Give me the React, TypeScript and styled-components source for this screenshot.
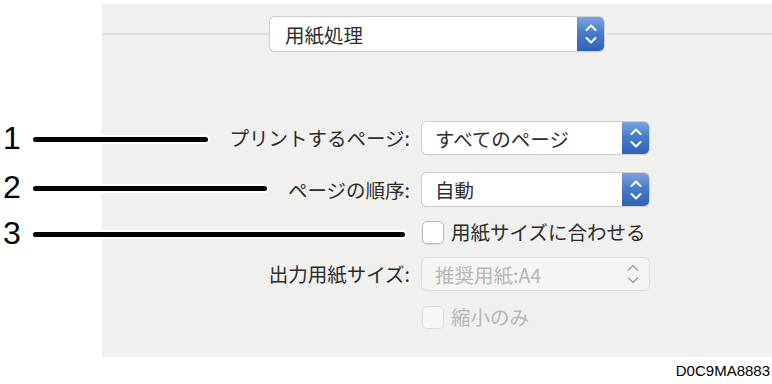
import React, { ReactNode } from 'react';
import styled, { createGlobalStyle } from 'styled-components';

const GlobalStyle = createGlobalStyle`
  html, body {
    margin: 0;
    padding: 0;
    background: #ffffff;
  }
  body {
    font-family: "Noto Sans CJK JP", "Noto Sans", sans-serif;
  }
`;

const Root = styled.div`
  position: relative;
  width: 772px;
  height: 384px;
  overflow: hidden;
  background: #ffffff;
`;

const Panel = styled.div`
  margin: 4px 0 0 102px;
  width: 670px;
  height: 353px;
  background: #f0f0ef;
  padding-top: 13px;
  box-sizing: border-box;
`;

const Header = styled.div`
  display: flex;
  align-items: center;
`;

const Rule = styled.div<{ $grow?: boolean }>`
  height: 2px;
  background: #dedede;
  flex: ${({ $grow }) => ($grow ? '1' : '0 0 168px')};
  margin-left: ${({ $grow }) => ($grow ? '3px' : '0')};
`;

const Form = styled.div`
  display: flex;
  flex-direction: column;
  margin-top: 71px;
`;

const Row = styled.div<{ $gap?: number }>`
  display: grid;
  grid-template-columns: 308px 227px;
  column-gap: 12px;
  align-items: center;
  margin-top: ${({ $gap }) => $gap ?? 0}px;
`;

const Label = styled.div<{ $disabled?: boolean }>`
  text-align: right;
  font-size: 19.5px;
  line-height: 24px;
  color: #2c2c2c;
  white-space: nowrap;
`;

const PopupBox = styled.div<{ $width?: number; $height: number; $disabled?: boolean }>`
  display: flex;
  align-items: stretch;
  width: ${({ $width }) => ($width ? `${$width}px` : 'auto')};
  height: ${({ $height }) => $height}px;
  box-sizing: border-box;
  border-radius: 5px;
  background: ${({ $disabled }) => ($disabled ? '#f5f5f4' : '#ffffff')};
  box-shadow: ${({ $disabled }) =>
    $disabled
      ? '0 0 0 1px #dcdcdc'
      : '0 0 0 1px #cfcfcf, 0 1px 1px 0 rgba(0, 0, 0, 0.18)'};
  overflow: hidden;
`;

const PopupText = styled.div<{ $disabled?: boolean; $pad: number }>`
  flex: 1;
  display: flex;
  align-items: center;
  padding-left: ${({ $pad }) => $pad}px;
  font-size: 19.5px;
  color: ${({ $disabled }) => ($disabled ? '#b7b7b7' : '#2c2c2c')};
  white-space: nowrap;
`;

const Stepper = styled.div<{ $disabled?: boolean }>`
  flex: 0 0 27px;
  display: flex;
  align-items: center;
  justify-content: center;
  background: ${({ $disabled }) =>
    $disabled ? 'transparent' : 'linear-gradient(to bottom, #7ca3df 0%, #4a7ccb 45%, #2f62b3 100%)'};
  margin-right: ${({ $disabled }) => ($disabled ? '3px' : '0')};
`;

const CheckRow = styled.div`
  display: flex;
  align-items: center;
  gap: 7px;
`;

const Box = styled.div<{ $disabled?: boolean }>`
  width: 22px;
  height: 23px;
  box-sizing: border-box;
  border-radius: 5px;
  background: ${({ $disabled }) => ($disabled ? '#f7f7f6' : '#ffffff')};
  border: 1px solid ${({ $disabled }) => ($disabled ? '#dadada' : '#b9b9b9')};
  box-shadow: ${({ $disabled }) => ($disabled ? 'none' : '0 1px 1px rgba(0, 0, 0, 0.08)')};
`;

const CheckText = styled.span<{ $disabled?: boolean }>`
  font-size: 19.5px;
  line-height: 24px;
  color: ${({ $disabled }) => ($disabled ? '#b7b7b7' : '#2c2c2c')};
  white-space: nowrap;
`;

const Callout = styled.div<{ $top: number }>`
  position: absolute;
  left: 0;
  top: ${({ $top }) => $top}px;
  display: flex;
  align-items: center;
`;

const Num = styled.span`
  width: 33px;
  padding-left: 3px;
  box-sizing: border-box;
  font-family: "Liberation Sans", Arial, sans-serif;
  font-size: 32px;
  line-height: 32px;
  color: #000000;
`;

const Leader = styled.div<{ $length: number }>`
  width: ${({ $length }) => $length}px;
  height: 5px;
  margin-top: 3px;
  border-radius: 3px;
  background: #000000;
  box-shadow: 0 0 0 2px #ffffff;
`;

const Code = styled.div`
  position: absolute;
  right: 2px;
  bottom: 6px;
  font-family: "Liberation Sans", Arial, sans-serif;
  font-size: 15px;
  line-height: 15px;
  color: #000000;
`;

const Chevrons = ({ color, width = 2 }: { color: string; width?: number }) => (
  <svg width="12" height="20" viewBox="0 0 12 20" fill="none">
    <path d="M1.5 6 L6 1.5 L10.5 6" stroke={color} strokeWidth={width} strokeLinecap="round" strokeLinejoin="round" />
    <path d="M1.5 14 L6 18.5 L10.5 14" stroke={color} strokeWidth={width} strokeLinecap="round" strokeLinejoin="round" />
  </svg>
);

interface PopupProps {
  children: ReactNode;
  width?: number;
  height?: number;
  pad?: number;
  disabled?: boolean;
}

const Popup = ({ children, width, height = 32, pad = 13, disabled }: PopupProps) => (
  <PopupBox $width={width} $height={height} $disabled={disabled}>
    <PopupText $pad={pad} $disabled={disabled}>
      {children}
    </PopupText>
    <Stepper $disabled={disabled}>
      <Chevrons color={disabled ? '#a9a9a9' : '#ffffff'} width={disabled ? 1.7 : 2} />
    </Stepper>
  </PopupBox>
);

const Checkbox = ({ children, disabled }: { children: ReactNode; disabled?: boolean }) => (
  <CheckRow>
    <Box $disabled={disabled} />
    <CheckText $disabled={disabled}>{children}</CheckText>
  </CheckRow>
);

export default function App() {
  return (
    <Root>
      <GlobalStyle />
      <Panel>
        <Header>
          <Rule />
          <Popup width={334} height={34} pad={15}>
            用紙処理
          </Popup>
          <Rule $grow />
        </Header>
        <Form>
          <Row>
            <Label>プリントするページ:</Label>
            <Popup>すべてのページ</Popup>
          </Row>
          <Row $gap={19}>
            <Label>ページの順序:</Label>
            <Popup height={33}>自動</Popup>
          </Row>
          <Row $gap={14}>
            <span />
            <Checkbox>用紙サイズに合わせる</Checkbox>
          </Row>
          <Row $gap={14}>
            <Label>出力用紙サイズ:</Label>
            <Popup disabled>推奨用紙:A4</Popup>
          </Row>
          <Row $gap={15}>
            <span />
            <Checkbox disabled>縮小のみ</Checkbox>
          </Row>
        </Form>
      </Panel>

      <Callout $top={122}>
        <Num>1</Num>
        <Leader $length={175} />
      </Callout>
      <Callout $top={171}>
        <Num>2</Num>
        <Leader $length={234} />
      </Callout>
      <Callout $top={217}>
        <Num>3</Num>
        <Leader $length={372} />
      </Callout>

      <Code>D0C9MA8883</Code>
    </Root>
  );
}
